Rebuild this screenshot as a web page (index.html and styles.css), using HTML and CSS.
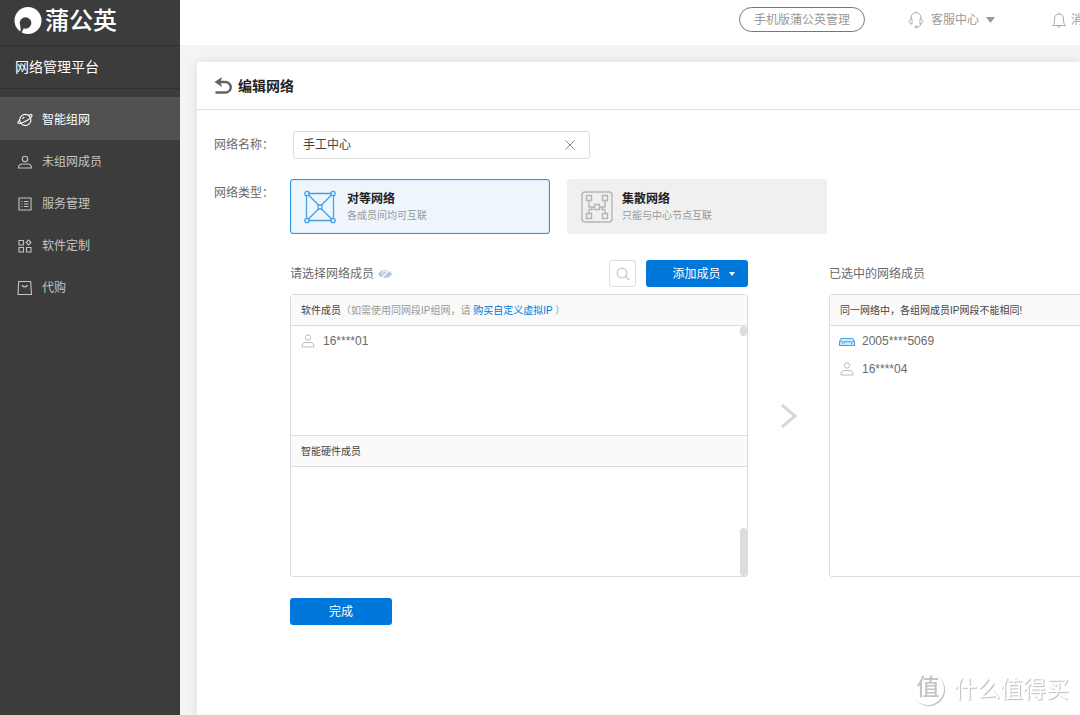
FILE: index.html
```html
<!DOCTYPE html>
<html lang="zh-CN">
<head>
<meta charset="utf-8">
<meta name="viewport" content="width=device-width, initial-scale=1">
<title>编辑网络</title>
<link rel="stylesheet" href="styles.css">
</head>
<body>
<div class="app">
  <aside class="sidebar">
    <div class="brand">
      <svg class="brand-logo" width="28" height="28" viewBox="0 0 28 28" aria-hidden="true"><circle cx="14" cy="13.500" r="13.500" fill="#fff"/><circle cx="11.500" cy="16" r="5.800" fill="#3c3c3c"/><path d="M6 18l3 2.500c1 1 .5 2-.5 3L7 27.500l-2-1.500 1.800-3z" fill="#3c3c3c"/></svg>
      <span class="brand-name">蒲公英</span>
    </div>
    <div class="platform">网络管理平台</div>
    <nav class="menu">
      <a class="menu-item menu-item-active" href="#">
        <svg class="icon" width="16" height="16" viewBox="0 0 16 16"><circle cx="8.300" cy="8" r="5.600"/><path d="M11.500 3.200c2-.8 3.300-.8 3.500-.1.500 1.500-3.500 4.900-7.500 6.700-3.400 1.500-6.400 1.900-6.600 1-.1-.7.800-1.800 2-2.800M5.500 6.500l1.800-1.300"/></svg>
        智能组网</a>
      <a class="menu-item" href="#">
        <svg class="icon" width="16" height="16" viewBox="0 0 16 16"><circle cx="8" cy="5" r="2.700"/><path d="M1.500 14c0-2.800 2-4 4-4h5c2 0 4 1.200 4 4z"/></svg>
        未组网成员</a>
      <a class="menu-item" href="#">
        <svg class="icon" width="16" height="16" viewBox="0 0 16 16"><path d="M2 2h12v12H2zM4.500 5.500h1M4.500 8h1M4.500 10.500h1M7 5.500h4.500M7 8h4.500M7 10.500h4.500"/></svg>
        服务管理</a>
      <a class="menu-item" href="#">
        <svg class="icon" width="16" height="16" viewBox="0 0 16 16"><path d="M2 2.500h4.500V7H2zM2 9.500h4.500V14H2zM9.500 9.500H14V14H9.500zM11.500 2l2.500 2.500L11.500 7 9 4.500z"/></svg>
        软件定制</a>
      <a class="menu-item" href="#">
        <svg class="icon" width="16" height="16" viewBox="0 0 16 16"><path d="M1.700 1.500h12l.8 13h-13.500zM5 5c.8 2.500 4.700 2.500 5.500 0"/></svg>
        代购</a>
    </nav>
  </aside>

  <main class="main">
    <header class="topbar">
      <button class="pill" type="button">手机版蒲公英管理</button>
      <a class="top-link" href="#">
        <svg class="top-icon" width="16" height="18" viewBox="0 0 16 18"><path d="M3 8V7a5 5.500 0 0 1 10 0v1M4 8v5C.2 13 .2 8 4 8zM12 8v5c3.800 0 3.800-5 0-5zM12.500 13c0 2-1.500 3-4 3"/><circle cx="8" cy="16" r="1"/></svg>
        客服中心
        <svg class="top-caret" width="9" height="6" viewBox="0 0 9 6"><path d="M0 0h9L4.500 6z"/></svg>
      </a>
      <a class="top-link top-link-last" href="#">
        <svg class="top-icon" width="16" height="18" viewBox="0 0 16 18"><path d="M1.500 14.500c1.800-1.400 2-3 2-6.500 0-3 1.500-5 4.500-5s4.500 2 4.500 5c0 3.500.2 5.100 2 6.500zM8 3V1.500M6.500 14.500c0 2.400 3 2.400 3 0"/></svg>
        消息
      </a>
    </header>

    <section class="card">
      <div class="card-head">
        <a class="back" href="#" aria-label="返回">
          <svg width="19" height="18" viewBox="0 0 19 18"><path d="M5 5h6.500a5.200 5.200 0 0 1 0 10.500H1.500" fill="none" stroke="#646464" stroke-width="2.500"/><path d="M8 0L6.500 5 8 10 .5 5z" fill="#646464"/></svg>
        </a>
        <h1 class="card-title">编辑网络</h1>
      </div>
      <form class="form">
        <label class="label" for="net-name">网络名称：</label>
        <div class="name-box">
          <input class="name-input" id="net-name" type="text" value="手工中心">
          <button class="clear" type="button" aria-label="清空">
            <svg width="12" height="12" viewBox="0 0 12 12"><path d="M1.500 1.500l9 9M10.500 1.500l-9 9" stroke="#888" fill="none"/></svg>
          </button>
        </div>

        <span class="label" id="type-label">网络类型：</span>
        <div class="types" role="radiogroup" aria-labelledby="type-label">
          <label class="type">
            <input class="type-radio" type="radio" name="type" checked>
            <svg class="type-icon" width="34" height="36" viewBox="0 0 34 36" fill="none" stroke="#46a0e8" stroke-width="1.300"><path d="M5 4.500h24M5 31.500h24M3.500 6v24M30.500 6v24M5.500 6l10 10M28.500 6l-10 10M5.500 30l10-10M28.500 30l-10-10"/><circle cx="4" cy="4.500" r="2.200"/><circle cx="30" cy="4.500" r="2.200"/><circle cx="4" cy="31.500" r="2.200"/><circle cx="30" cy="31.500" r="2.200"/><path d="M15 16h4v4h-4z"/></svg>
            <span class="type-text"><b class="type-name">对等网络</b><span class="type-desc">各成员间均可互联</span></span>
          </label>
          <label class="type type-hub">
            <input class="type-radio" type="radio" name="type">
            <svg class="type-icon" width="34" height="36" viewBox="0 0 34 36" fill="none" stroke="#b5b5b5" stroke-width="1.400"><rect x="2" y="3" width="30" height="30" rx="3"/><path d="M6.500 6.500h5v5h-5zM22.500 6.500h5v5h-5zM6.500 24.500h5v5h-5zM22.500 24.500h5v5h-5zM14.500 15.500h5v5h-5zM9 11.500v6.500h5.500M25 11.500v6.500h-5.500M9 24.500v-4h3V18M25 24.500v-4h-3V18"/></svg>
            <span class="type-text"><b class="type-name">集散网络</b><span class="type-desc">只能与中心节点互联</span></span>
          </label>
        </div>

        <div class="members">
          <div class="column">
            <div class="column-head">
              <h2 class="column-title">请选择网络成员</h2>
              <svg class="eye" width="14" height="10" viewBox="0 0 14 10"><path d="M0 5C3-.3 11-.3 14 5 11 10.300 3 10.300 0 5z" fill="#b7c7d8"/><path d="M5 6.500a2.500 2.500 0 0 1 3.500-3.700" stroke="#fff" fill="none"/><path d="M3.500 10L11.500 0" stroke="#fff" stroke-width="1.300"/></svg>
              <button class="search" type="button" aria-label="搜索">
                <svg width="14" height="14" viewBox="0 0 14 14" fill="none" stroke="#c3c6cc" stroke-width="1.200"><circle cx="6" cy="6" r="4.800"/><path d="M9.500 9.500l4 3.500"/></svg>
              </button>
              <button class="primary add" type="button">添加成员
                <svg width="6" height="4" viewBox="0 0 6 4"><path d="M0 0h6L3 4z" fill="#fff"/></svg>
              </button>
            </div>
            <div class="panel">
              <div class="panel-head">软件成员<span class="hint">（如需使用同网段IP组网，请 <a class="buy" href="#">购买自定义虚拟IP</a> ）</span></div>
              <ul class="list">
                <li class="member"><svg class="member-icon person" width="16" height="16" viewBox="0 0 16 16"><circle cx="8" cy="4.500" r="2.700"/><path d="M2 14c0-3.400 1.500-4.500 4-4.500h4c2.500 0 4 1.100 4 4.500z"/></svg>16****01</li>
              </ul>
              <span class="thumb thumb-top"></span>
              <div class="panel-head panel-head-next">智能硬件成员</div>
              <ul class="list"></ul>
              <span class="thumb thumb-bottom"></span>
            </div>
          </div>
          <svg class="arrow" width="18" height="26" viewBox="0 0 18 26"><path d="M2 2l13 11L2 24" fill="none" stroke="#d8d8d8" stroke-width="3"/></svg>
          <div class="column">
            <div class="column-head"><h2 class="column-title">已选中的网络成员</h2></div>
            <div class="panel panel-selected">
              <div class="panel-head">同一网络中，各组网成员IP网段不能相同!</div>
              <ul class="list">
                <li class="member"><svg class="member-icon router" width="16" height="16" viewBox="0 0 16 16"><path d="M2 5.500h12l1.500 3v4H.5v-4z" fill="#d4eafb"/><path d="M.5 8.800h15v3.700H.5zM3 10.700h1M5 10.700h1M12 10.700h1.500"/></svg>2005****5069</li>
                <li class="member"><svg class="member-icon person" width="16" height="16" viewBox="0 0 16 16"><circle cx="8" cy="4.500" r="2.700"/><path d="M2 14c0-3.400 1.500-4.500 4-4.500h4c2.500 0 4 1.100 4 4.500z"/></svg>16****04</li>
              </ul>
            </div>
          </div>
        </div>
        <button class="primary done" type="submit">完成</button>
      </form>
    </section>
  </main>
</div>
<div class="watermark"><span class="mark">值</span><span>什么值得买</span></div>
</body>
</html>
```

FILE: styles.css
```css
* { box-sizing: border-box; }

body {
  margin: 0;
  overflow: hidden;
  font: 12px/18px "Liberation Sans", "Noto Sans CJK SC", sans-serif;
  color: #6a6a6a;
  background: #f4f4f4;
}

button, input { font: inherit; }
button { padding: 0; cursor: pointer; }
a { color: inherit; text-decoration: none; }
svg { flex: none; }

.app { display: flex; min-height: 100vh; }

/* Sidebar */
.sidebar {
  flex: none;
  width: 180px;
  background: #3c3c3c;
  color: #fff;
}
.brand {
  display: flex;
  align-items: center;
  gap: 3px;
  height: 46px;
  padding: 0 14px 4px;
  border-bottom: 1px solid #303030;
}
.brand-name { font-size: 24px; line-height: 28px; font-weight: 500; }
.platform {
  height: 43px;
  padding-left: 15px;
  border-bottom: 1px solid #303030;
  font-size: 14px;
  line-height: 42px;
}
.menu { padding-top: 8px; }
.menu-item {
  display: flex;
  align-items: center;
  gap: 9px;
  height: 42px;
  padding: 2px 0 0 17px;
  color: #c4c4c4;
}
.menu-item-active { height: 43px; background: #515151; color: #fff; }
.icon { fill: none; stroke: currentColor; stroke-width: 1.1; }

/* Top bar */
.main { flex: 1; min-width: 0; overflow: hidden; }
.topbar {
  display: flex;
  align-items: center;
  justify-content: flex-end;
  min-width: 980px;
  height: 45px;
  padding: 0 65px 6px 0;
  background: #fff;
  color: #999;
}
.pill {
  height: 25px;
  padding: 0 14px;
  border: 1px solid #777;
  border-radius: 13px;
  background: #fff;
  color: #999;
}
.top-link { display: flex; align-items: center; gap: 7px; margin-left: 43px; }
.top-link-last { gap: 4px; margin-left: 56px; }
.top-icon { fill: none; stroke: #aaa; stroke-width: 1; }
.top-caret { fill: #999; }

/* Card */
.card {
  min-height: calc(100vh - 62px);
  margin: 17px 0 0 17px;
  background: #fff;
  box-shadow: 0 0 10px rgba(0, 0, 0, .1);
}
.card-head {
  display: flex;
  align-items: center;
  gap: 5px;
  height: 48px;
  padding-left: 17px;
  border-bottom: 1px solid #e0e0e0;
}
.back { display: flex; }
.card-title { margin: 0; font-size: 14px; line-height: 20px; color: #222; }

.form {
  display: grid;
  grid-template-columns: 76px 1fr;
  row-gap: 20px;
  padding: 21px 0 20px 17px;
}
.label { padding-top: 5px; white-space: nowrap; }

.name-box {
  display: flex;
  align-items: center;
  width: 297px;
  height: 28px;
  margin-left: 3px;
  padding: 0 13px 0 9px;
  border: 1px solid #ddd;
  border-radius: 3px;
}
.name-input {
  flex: 1;
  min-width: 0;
  padding: 0;
  border: 0;
  outline: 0;
  background: none;
  color: #444;
}
.clear { display: flex; border: 0; background: none; }

.types { display: flex; gap: 17px; }
.type {
  display: flex;
  align-items: center;
  gap: 10px;
  width: 260px;
  height: 55px;
  padding-left: 12px;
  border: 1px solid #f0f0f0;
  border-radius: 3px;
  background: #f0f0f0;
}
.type-hub { gap: 8px; }
.type:has(:checked) {
  border-color: #2f93e6;
  background: #eef5fd;
  box-shadow: inset 0 0 1px #2f93e6;
}
.type-radio { position: absolute; opacity: 0; }
.type-text { display: flex; flex-direction: column; }
.type-name { color: #222; line-height: 17px; }
.type-desc { color: #999; font-size: 10px; line-height: 15px; }

/* Member pickers */
.members {
  grid-column: 2;
  display: grid;
  grid-template-columns: minmax(458px, 1fr) 81px minmax(458px, 1fr);
  margin-top: 6px;
}
.column-head { display: flex; align-items: center; height: 27px; margin-bottom: 7px; }
.column-title { margin: 0; font-size: 12px; font-weight: 400; }
.eye { margin-left: 4px; }
.search {
  display: flex;
  align-items: center;
  justify-content: center;
  width: 27px;
  height: 27px;
  margin: 0 10px 0 auto;
  border: 1px solid #ddd;
  border-radius: 3px;
  background: #fff;
}
.primary {
  width: 102px;
  height: 27px;
  border: 0;
  border-radius: 3px;
  background: #0078db;
  color: #fff;
}
.add { display: flex; align-items: center; justify-content: center; gap: 8px; padding-left: 13px; }
.done { grid-column: 2; margin-top: 1px; }

.panel {
  position: relative;
  border: 1px solid #ddd;
  border-radius: 3px;
}
.panel-head {
  height: 31px;
  padding-left: 10px;
  border-bottom: 1px solid #ddd;
  background: #fafafa;
  color: #444;
  font-size: 10px;
  line-height: 31px;
}
.panel-head-next { height: 32px; border-top: 1px solid #ddd; }
.hint { color: #999; }
.buy { color: #0078db; }
.list {
  min-height: 109px;
  margin: 0;
  padding: 1px 0 0 9px;
  list-style: none;
}
.panel-selected .list { min-height: 250px; }
.member { display: flex; align-items: center; gap: 7px; height: 28px; }
.member-icon { fill: none; stroke-width: 1; }
.person { stroke: #bbb; }
.router { stroke: #3f9fe8; }
.thumb { position: absolute; right: 0; width: 7px; border-radius: 4px; background: #ddd; }
.thumb-top { top: 31px; height: 10px; }
.thumb-bottom { bottom: 0; height: 48px; }
.arrow { align-self: center; justify-self: center; margin-bottom: 6px; }

.watermark {
  position: fixed;
  right: 11px;
  bottom: 9px;
  display: flex;
  align-items: center;
  gap: 10px;
  color: #fff;
  font-size: 23px;
  line-height: 34px;
  text-shadow: 1px 1px 1px #bbb;
}
.mark {
  width: 32px;
  height: 32px;
  border-radius: 50%;
  box-shadow: 1px 1px 1px #bbb;
  color: #c4c4c4;
  font-weight: 500;
  line-height: 29px;
  text-align: center;
  text-shadow: none;
}
```
